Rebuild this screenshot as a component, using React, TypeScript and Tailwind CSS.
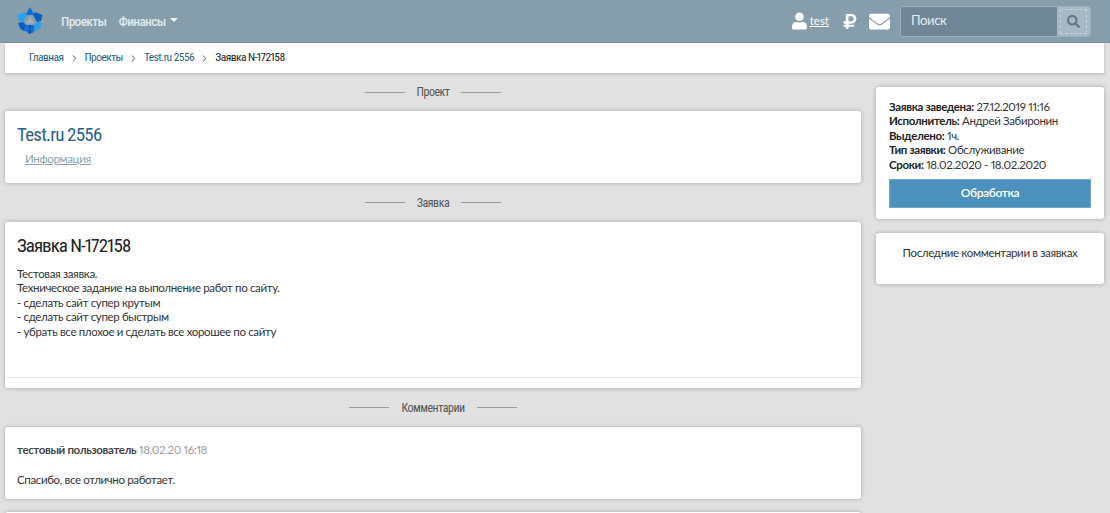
import { ChevronRight } from 'lucide-react';
import { FaUser, FaRubleSign, FaEnvelope, FaSearch } from 'react-icons/fa';

const condensed = "font-['Roboto',sans-serif] [font-stretch:75%]";

function Logo() {
  return (
    <svg width="28" height="28" viewBox="0 0 28 28" className="ml-[16px]">
      <path d="M14 0 L18.5 8 L9.5 8 Z" fill="#0f6fd6" />
      <path d="M1.5 8 L9 5 L11 8 L7 15 L3 14 Z" fill="#2ba0f0" />
      <path d="M26.5 8 L19 5 L17 8 L21 15 L25 14 Z" fill="#0b5fc0" />
      <path d="M2 16 L7 15 L10 18 L9 24 Q4 24 2 16 Z" fill="#0b5fc0" />
      <path d="M26 16 L21 15 L18 18 L19 24 Q24 24 26 16 Z" fill="#2ba0f0" />
      <path d="M10 18 L18 18 L18.5 24 Q14 29 9.5 24 Z" fill="#0f6fd6" />
      <path d="M14 18 L14 27" stroke="#063f8a" strokeWidth="1" />
      <path d="M14 9 L18.5 16.5 L9.5 16.5 Z" fill="#9ab0bd" />
    </svg>
  );
}

function Divider({ label, height = 'h-[39px]' }: { label: string; height?: string }) {
  return (
    <div className={`flex items-center justify-center ${height}`}>
      <span className="h-px w-[40px] bg-[#9a9a9a]" />
      <span className={`mx-[12px] text-[12px] tracking-[-0.5px] text-[#555] ${condensed}`}>{label}</span>
      <span className="h-px w-[40px] bg-[#9a9a9a]" />
    </div>
  );
}

function Card({ className, children }: { className: string; children: React.ReactNode }) {
  return (
    <div className={`rounded-[3px] bg-white shadow-[0_0_4px_rgba(0,0,0,0.25)] ${className}`}>{children}</div>
  );
}

function Row({ label, value }: { label: string; value: string }) {
  return (
    <div className="h-[14.4px] leading-[14.4px] whitespace-nowrap">
      <b className="font-bold text-[#222]">{label}</b> {value}
    </div>
  );
}

export default function App() {
  return (
    <div className="h-[513px] overflow-hidden bg-[#e1e1e1] font-['Lato','Roboto',sans-serif] text-[11.5px] tracking-[-0.35px] text-[#333] proportional-nums">
      <header className="flex h-[43px] items-center border-b border-[#7f95a3] bg-[#869dab]">
        <Logo />
        <nav className={`ml-[17px] flex items-center gap-[12px] text-[13.5px] font-medium tracking-[-0.7px] text-[#dfe8ed] ${condensed}`}>
          <span>Проекты</span>
          <span className="flex items-center gap-[4px]">
            Финансы
            <span className="mt-[-2px] h-0 w-0 border-x-[4px] border-t-[4px] border-x-transparent border-t-[#eef3f6]" />
          </span>
        </nav>
        <div className="ml-auto flex items-center text-white">
          <FaUser className="h-[18px] w-[15px]" />
          <span className="ml-[3px] text-[11.5px] tracking-normal underline">test</span>
          <FaRubleSign className="ml-[14px] h-[17px] w-[14px]" />
          <FaEnvelope className="ml-[12px] h-[21px] w-[21px]" />
          <div className="mr-[19px] ml-[10px] flex h-[31px] w-[191px] rounded-[3px] border border-[#9cb0bc]">
            <div className="flex flex-1 items-center rounded-l-[2px] bg-[#6f8796] pl-[10px] text-[13px] text-[#e6edf1]">
              Поиск
            </div>
            <div className="flex w-[33px] items-center justify-center rounded-r-[2px] bg-[#a5b8c4]">
              <div className="flex h-[25px] w-[27px] items-center justify-center border border-dashed border-[#c4d2da]">
                <FaSearch className="h-[13px] w-[13px] text-[#5f7786]" />
              </div>
            </div>
          </div>
        </div>
      </header>

      <div className={`mr-[6px] ml-[5px] flex h-[30px] items-center bg-white pl-[24px] text-[11.5px] tracking-[-0.55px] shadow-[0_1px_3px_rgba(0,0,0,0.2)] ${condensed}`}>
        <span className="text-[#2a5f85]">Главная</span>
        <ChevronRight className="mx-[5px] h-[11px] w-[11px] text-[#444]" />
        <span className="text-[#2a5f85]">Проекты</span>
        <ChevronRight className="mx-[5px] h-[11px] w-[11px] text-[#444]" />
        <span className="text-[#2a5f85]">Test.ru 2556</span>
        <ChevronRight className="mx-[5px] h-[11px] w-[11px] text-[#444]" />
        <span className="text-[#222]">Заявка N-172158</span>
      </div>

      <div className="flex items-start">
        <main className="ml-[5px] w-[856px]">
          <Divider label="Проект" height="h-[38px]" />
          <Card className="h-[72px] pt-[12px] pl-[12px]">
            <div className={`text-[19px] leading-[24px] tracking-[-0.8px] text-[#2a5f85] ${condensed}`}>Test.ru 2556</div>
            <div className="mt-[3px] ml-[8px] text-[#8aa3b3] underline">Информация</div>
          </Card>
          <Divider label="Заявка" />
          <Card className="h-[166px] pt-[12px]">
            <div className={`pl-[12px] text-[19px] leading-[24px] tracking-[-1px] text-[#222] ${condensed}`}>Заявка N-172158</div>
            <div className="mt-[9px] pl-[12px] leading-[14.4px]">
              <div>Тестовая заявка.</div>
              <div>Техническое задание на выполнение работ по сайту.</div>
              <div>- сделать сайт супер крутым</div>
              <div>- сделать сайт супер быстрым</div>
              <div>- убрать все плохое и сделать все хорошее по сайту</div>
            </div>
            <div className="mt-[38px] border-t border-[#e9edf0]" />
          </Card>
          <Divider label="Комментарии" />
          <Card className="h-[72px] pt-[14px] pl-[12px]">
            <div>
              <b className="font-bold text-[#444]">тестовый пользователь</b>{' '}
              <span className="text-[#9a9a9a]">18.02.20 16:18</span>
            </div>
            <div className="mt-[13px]">Спасибо, все отлично работает.</div>
          </Card>
          <Card className="mt-[13px] h-[20px]">{null}</Card>
        </main>

        <aside className="mt-[14px] ml-[15px] w-[228px]">
          <Card className="h-[132px] px-[13px] pt-[13px]">
            <Row label="Заявка заведена:" value="27.12.2019 11:16" />
            <Row label="Исполнитель:" value="Андрей Забиронин" />
            <Row label="Выделено:" value="1ч." />
            <Row label="Тип заявки:" value="Обслуживание" />
            <Row label="Сроки:" value="18.02.2020 - 18.02.2020" />
            <div className="mt-[7px] flex h-[29px] items-center justify-center border border-[#6fa8c9] bg-[#4c91bb] text-[12px] font-semibold text-white">
              Обработка
            </div>
          </Card>
          <Card className="mt-[14px] h-[51px] pt-[11px] text-center">Последние комментарии в заявках</Card>
        </aside>
      </div>
    </div>
  );
}
